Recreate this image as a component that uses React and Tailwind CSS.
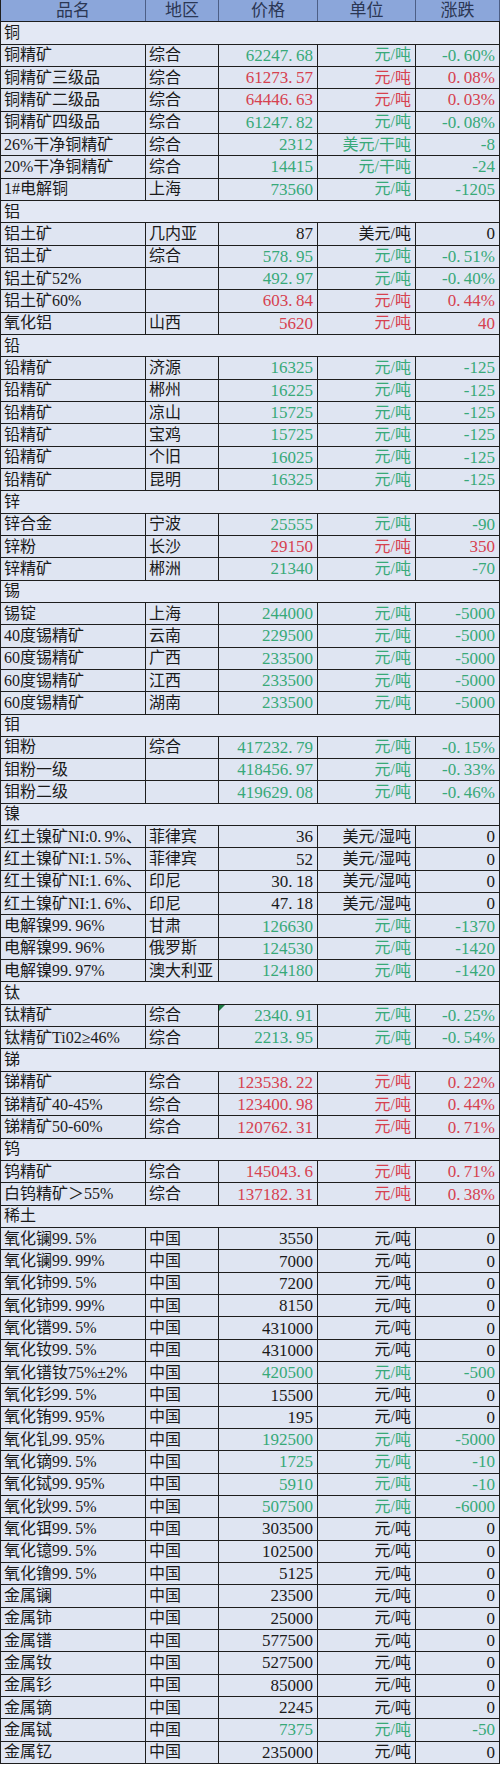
const sections = [
  {
    name: '铜',
    rows: [
      ['铜精矿', '综合', '62247.68', '元/吨', '-0.60%', 'g'],
      ['铜精矿三级品', '综合', '61273.57', '元/吨', '0.08%', 'r'],
      ['铜精矿二级品', '综合', '64446.63', '元/吨', '0.03%', 'r'],
      ['铜精矿四级品', '综合', '61247.82', '元/吨', '-0.08%', 'g'],
      ['26%干净铜精矿', '综合', '2312', '美元/干吨', '-8', 'g'],
      ['20%干净铜精矿', '综合', '14415', '元/干吨', '-24', 'g'],
      ['1#电解铜', '上海', '73560', '元/吨', '-1205', 'g'],
    ],
  },
  {
    name: '铝',
    rows: [
      ['铝土矿', '几内亚', '87', '美元/吨', '0', 'k'],
      ['铝土矿', '综合', '578.95', '元/吨', '-0.51%', 'g'],
      ['铝土矿52%', '', '492.97', '元/吨', '-0.40%', 'g'],
      ['铝土矿60%', '', '603.84', '元/吨', '0.44%', 'r'],
      ['氧化铝', '山西', '5620', '元/吨', '40', 'r'],
    ],
  },
  {
    name: '铅',
    rows: [
      ['铅精矿', '济源', '16325', '元/吨', '-125', 'g'],
      ['铅精矿', '郴州', '16225', '元/吨', '-125', 'g'],
      ['铅精矿', '凉山', '15725', '元/吨', '-125', 'g'],
      ['铅精矿', '宝鸡', '15725', '元/吨', '-125', 'g'],
      ['铅精矿', '个旧', '16025', '元/吨', '-125', 'g'],
      ['铅精矿', '昆明', '16325', '元/吨', '-125', 'g'],
    ],
  },
  {
    name: '锌',
    rows: [
      ['锌合金', '宁波', '25555', '元/吨', '-90', 'g'],
      ['锌粉', '长沙', '29150', '元/吨', '350', 'r'],
      ['锌精矿', '郴洲', '21340', '元/吨', '-70', 'g'],
    ],
  },
  {
    name: '锡',
    rows: [
      ['锡锭', '上海', '244000', '元/吨', '-5000', 'g'],
      ['40度锡精矿', '云南', '229500', '元/吨', '-5000', 'g'],
      ['60度锡精矿', '广西', '233500', '元/吨', '-5000', 'g'],
      ['60度锡精矿', '江西', '233500', '元/吨', '-5000', 'g'],
      ['60度锡精矿', '湖南', '233500', '元/吨', '-5000', 'g'],
    ],
  },
  {
    name: '钼',
    rows: [
      ['钼粉', '综合', '417232.79', '元/吨', '-0.15%', 'g'],
      ['钼粉一级', '', '418456.97', '元/吨', '-0.33%', 'g'],
      ['钼粉二级', '', '419629.08', '元/吨', '-0.46%', 'g'],
    ],
  },
  {
    name: '镍',
    rows: [
      ['红土镍矿NI:0.9%、', '菲律宾', '36', '美元/湿吨', '0', 'k'],
      ['红土镍矿NI:1.5%、', '菲律宾', '52', '美元/湿吨', '0', 'k'],
      ['红土镍矿NI:1.6%、', '印尼', '30.18', '美元/湿吨', '0', 'k'],
      ['红土镍矿NI:1.6%、', '印尼', '47.18', '美元/湿吨', '0', 'k'],
      ['电解镍99.96%', '甘肃', '126630', '元/吨', '-1370', 'g'],
      ['电解镍99.96%', '俄罗斯', '124530', '元/吨', '-1420', 'g'],
      ['电解镍99.97%', '澳大利亚', '124180', '元/吨', '-1420', 'g'],
    ],
  },
  {
    name: '钛',
    rows: [
      ['钛精矿', '综合', '2340.91', '元/吨', '-0.25%', 'g', true],
      ['钛精矿Ti02≥46%', '综合', '2213.95', '元/吨', '-0.54%', 'g'],
    ],
  },
  {
    name: '锑',
    rows: [
      ['锑精矿', '综合', '123538.22', '元/吨', '0.22%', 'r'],
      ['锑精矿40-45%', '综合', '123400.98', '元/吨', '0.44%', 'r'],
      ['锑精矿50-60%', '综合', '120762.31', '元/吨', '0.71%', 'r'],
    ],
  },
  {
    name: '钨',
    rows: [
      ['钨精矿', '综合', '145043.6', '元/吨', '0.71%', 'r'],
      ['白钨精矿＞55%', '综合', '137182.31', '元/吨', '0.38%', 'r'],
    ],
  },
  {
    name: '稀土',
    rows: [
      ['氧化镧99.5%', '中国', '3550', '元/吨', '0', 'k'],
      ['氧化镧99.99%', '中国', '7000', '元/吨', '0', 'k'],
      ['氧化铈99.5%', '中国', '7200', '元/吨', '0', 'k'],
      ['氧化铈99.99%', '中国', '8150', '元/吨', '0', 'k'],
      ['氧化镨99.5%', '中国', '431000', '元/吨', '0', 'k'],
      ['氧化钕99.5%', '中国', '431000', '元/吨', '0', 'k'],
      ['氧化镨钕75%±2%', '中国', '420500', '元/吨', '-500', 'g'],
      ['氧化钐99.5%', '中国', '15500', '元/吨', '0', 'k'],
      ['氧化铕99.95%', '中国', '195', '元/吨', '0', 'k'],
      ['氧化钆99.95%', '中国', '192500', '元/吨', '-5000', 'g'],
      ['氧化镝99.5%', '中国', '1725', '元/吨', '-10', 'g'],
      ['氧化铽99.95%', '中国', '5910', '元/吨', '-10', 'g'],
      ['氧化钬99.5%', '中国', '507500', '元/吨', '-6000', 'g'],
      ['氧化铒99.5%', '中国', '303500', '元/吨', '0', 'k'],
      ['氧化镱99.5%', '中国', '102500', '元/吨', '0', 'k'],
      ['氧化镥99.5%', '中国', '5125', '元/吨', '0', 'k'],
      ['金属镧', '中国', '23500', '元/吨', '0', 'k'],
      ['金属铈', '中国', '25000', '元/吨', '0', 'k'],
      ['金属镨', '中国', '577500', '元/吨', '0', 'k'],
      ['金属钕', '中国', '527500', '元/吨', '0', 'k'],
      ['金属钐', '中国', '85000', '元/吨', '0', 'k'],
      ['金属镝', '中国', '2245', '元/吨', '0', 'k'],
      ['金属铽', '中国', '7375', '元/吨', '-50', 'g'],
      ['金属钇', '中国', '235000', '元/吨', '0', 'k'],
    ],
  },
];

const tone = {
  g: 'text-[#38a979]',
  r: 'text-[#d6414f]',
  k: 'text-[#1a1a1a]',
};

// SimSun-style wide decimal point
const wide = (t) => t.replace(/\./g, '.\u2009');

const row = 'grid grid-cols-[145px_73px_99px_98px_1fr] h-[22.34px] border-b border-[#1e1e1e]';
const cell = 'flex items-center overflow-hidden whitespace-nowrap border-r border-[#1e1e1e] leading-none';

function DataRow({ r }) {
  const [name, area, price, unit, change, c, flag] = r;
  return (
    <div className={`${row} bg-[#dfe5f2]`}>
      <div className={`${cell} pl-[3px] text-[16px] text-[#1a1a1a]`}>{wide(name)}</div>
      <div className={`${cell} pl-[3px] text-[16px] text-[#1a1a1a]`}>{area}</div>
      <div className={`${cell} relative justify-end pr-[4px] text-[17px] ${tone[c]}`}>
        {flag && (
          <span className="absolute left-0 top-0 w-0 h-0 border-t-[6px] border-r-[6px] border-t-[#1f7a45] border-r-transparent" />
        )}
        {wide(price)}
      </div>
      <div className={`${cell} justify-end pr-[4px] text-[16px] ${tone[c]}`}>{unit}</div>
      <div className={`${cell} justify-end pr-[4px] text-[17px] ${tone[c]}`}>{wide(change)}</div>
    </div>
  );
}

export default function App() {
  return (
    <div className="w-[500px] border-l border-[#1e1e1e] bg-[#dfe5f2] font-['Liberation_Serif','Noto_Sans_CJK_SC',serif]">
      <div className={`${row} bg-[#8ba6da] text-[#2b3754]`}>
        {['品名', '地区', '价格', '单位', '涨跌'].map((h) => (
          <div key={h} className={`${cell} justify-center text-[17px] border-[#4d5f86]`}>
            {h}
          </div>
        ))}
      </div>
      {sections.map((s) => (
        <div key={s.name}>
          <div className="flex items-center h-[22.34px] pl-[3px] border-b border-r border-[#1e1e1e] bg-[#e3e8f4] text-[16px] text-[#1a1a1a] leading-none">
            {s.name}
          </div>
          {s.rows.map((r, i) => (
            <DataRow key={i} r={r} />
          ))}
        </div>
      ))}
    </div>
  );
}
